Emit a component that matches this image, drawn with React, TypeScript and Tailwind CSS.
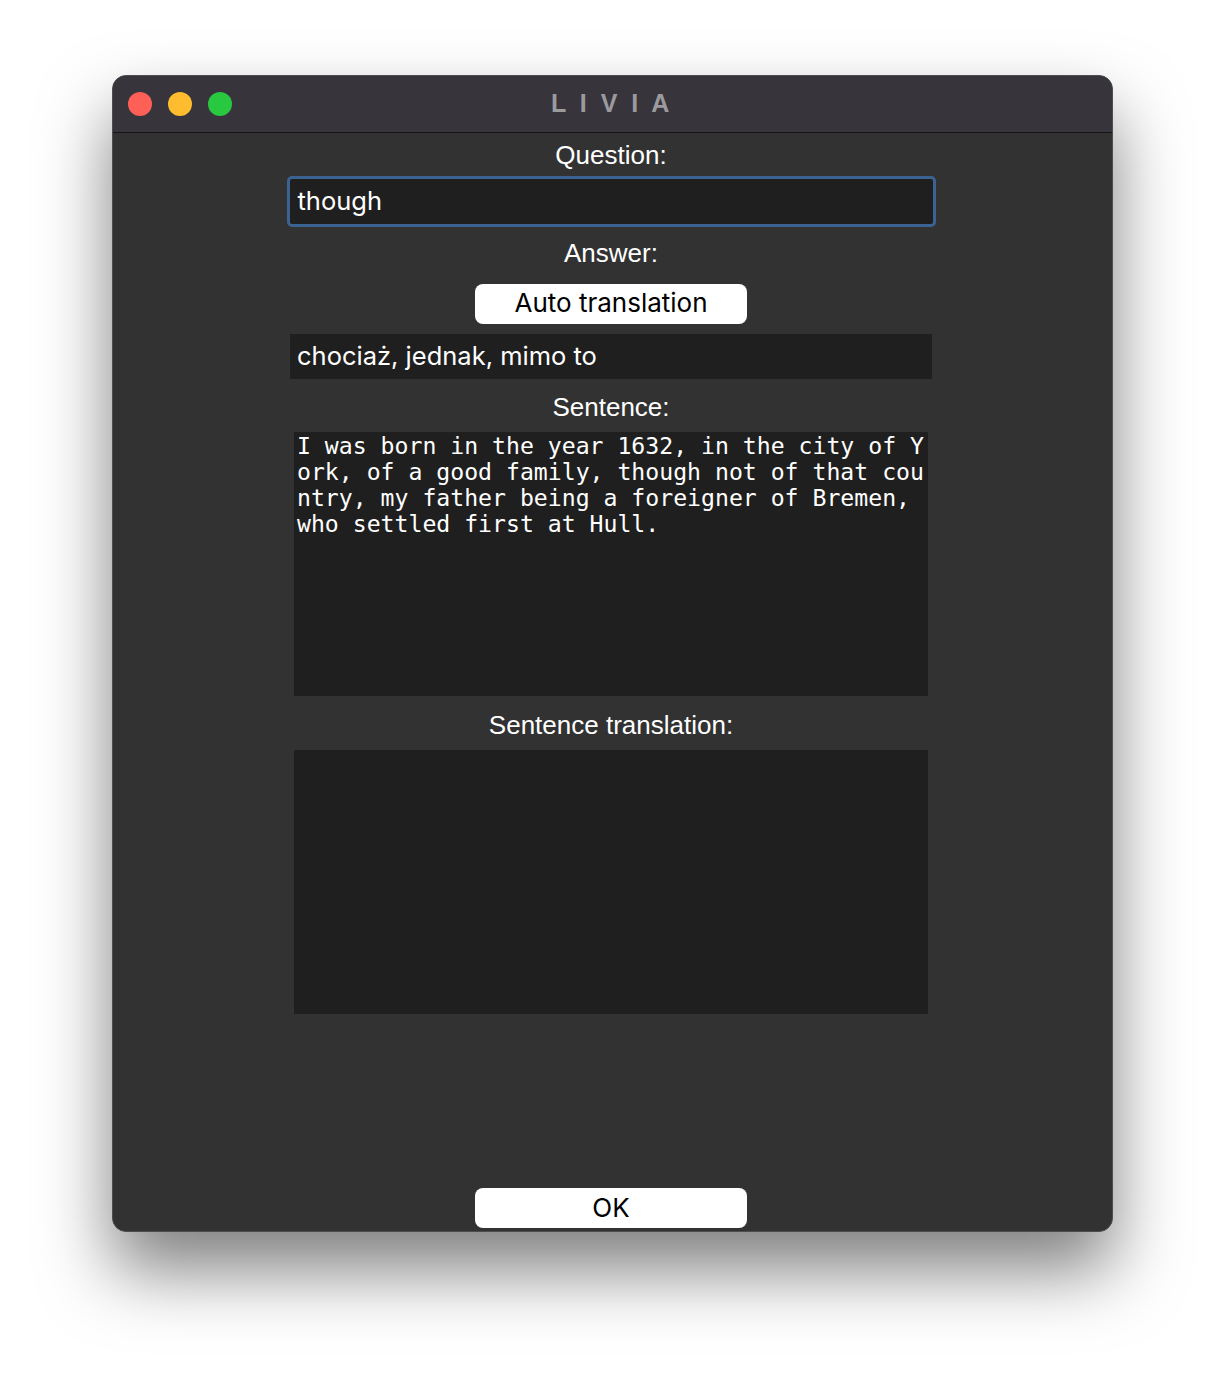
import React from 'react';

const sentence =
  'I was born in the year 1632, in the city of York, of a good family, though not of that country, my father being a foreigner of Bremen, who settled first at Hull.';

function TrafficLights() {
  return (
    <div className="flex items-center gap-4">
      <span className="block w-6 h-6 rounded-full bg-[#fe5f57]" />
      <span className="block w-6 h-6 rounded-full bg-[#febc2e]" />
      <span className="block w-6 h-6 rounded-full bg-[#28c840]" />
    </div>
  );
}

function Label({ children, className = '' }: { children: React.ReactNode; className?: string }) {
  return (
    <div
      className={`h-[30px] leading-[30px] text-center text-white text-[26px] font-['Liberation_Sans',Arial,sans-serif] ${className}`}
    >
      {children}
    </div>
  );
}

export default function App() {
  return (
    <div className="min-h-[1380px] bg-white pt-[75px]">
      <div className="mx-auto w-[1001px] h-[1157px] rounded-[14px] border border-[#4d4d4f] bg-[#323232] overflow-hidden shadow-[0_38px_70px_rgba(0,0,0,0.5)] flex flex-col">
        {/* Title bar */}
        <div className="relative h-[57px] shrink-0 bg-[#37353b] border-b border-[#151515] flex items-center pl-[15px]">
          <TrafficLights />
          <div className="absolute inset-0 flex items-center justify-center pointer-events-none">
            <span className="text-[25px] font-bold tracking-[3.5px] text-[#9b9a9f] font-['Liberation_Sans',Arial,sans-serif] whitespace-pre">
              L I V I A
            </span>
          </div>
        </div>

        {/* Content */}
        <div className="flex-1 flex flex-col items-center pr-[2px]">
          <Label className="mt-[7px]">Question:</Label>
          <div className="mt-[6px] w-[649px] h-[51px] rounded-[5px] border-[3px] border-[#3b6391] bg-[#1f1f1f] flex items-center pl-[8px]">
            <span className="text-white text-[25.5px] font-['Inter',sans-serif]">though</span>
          </div>

          <Label className="mt-[11px]">Answer:</Label>
          <button className="mt-[16px] w-[272px] h-[40px] pb-[3px] rounded-[8px] bg-white text-black text-[26px] font-['Inter',sans-serif] flex items-center justify-center">
            Auto translation
          </button>
          <div className="mt-[10px] w-[642px] h-[45px] bg-[#1f1f1f] flex items-center pl-[7px]">
            <span className="text-white text-[25.5px] font-['Inter',sans-serif]">chociaż, jednak, mimo to</span>
          </div>

          <Label className="mt-[13px]">Sentence:</Label>
          <div className="mt-[10px] w-[634px] h-[264px] bg-[#1f1f1f] pl-[3px] pr-[2px] pt-[1px]">
            <p className="text-white text-[23.15px] leading-[26px] break-all font-['DejaVu_Sans_Mono',monospace]">
              {sentence}
            </p>
          </div>

          <Label className="mt-[14px]">Sentence translation:</Label>
          <div className="mt-[10px] w-[634px] h-[264px] bg-[#1f1f1f]" />

          <button className="mt-auto mb-[3px] w-[272px] h-[40px] pb-[2px] rounded-[8px] bg-white text-black text-[26px] font-['Inter',sans-serif] flex items-center justify-center">
            OK
          </button>
        </div>
      </div>
    </div>
  );
}
